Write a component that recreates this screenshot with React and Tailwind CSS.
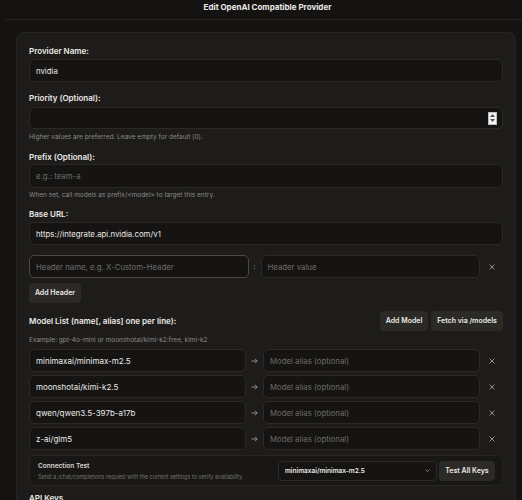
import React from 'react'

const font = { fontFamily: 'Inter, "Noto Sans", sans-serif' }

const inputCls =
  'block w-full h-[23px] rounded-[5px] border border-[#2a2926] bg-[#151413] px-[6px] text-[7.8px] text-[#ebe9e6] placeholder:text-[#6e6b67] outline-none'

function Label({ children, className = '' }) {
  return (
    <div className={`text-[8px] leading-[12px] font-semibold text-[#ebe9e6] ${className}`}>
      {children}
    </div>
  )
}

function Help({ children, className = '' }) {
  return <div className={`text-[6.5px] leading-[10px] text-[#8c8985] ${className}`}>{children}</div>
}

function SmallButton({ children, className = '' }) {
  return (
    <button
      className={`block h-[20px] rounded-[4px] bg-[#2b2a27] text-[7px] font-semibold text-[#ebe9e6] ${className}`}
    >
      {children}
    </button>
  )
}

function RemoveX() {
  return (
    <div className="w-[23px] flex justify-center items-center text-[#9a9794]">
      <svg width="6" height="6" viewBox="0 0 6 6" fill="none" stroke="currentColor" strokeWidth="0.9">
        <path d="M0.5 0.5 L5.5 5.5 M5.5 0.5 L0.5 5.5" />
      </svg>
    </div>
  )
}

const models = ['minimaxai/minimax-m2.5', 'moonshotai/kimi-k2.5', 'qwen/qwen3.5-397b-a17b', 'z-ai/glm5']

export default function App() {
  return (
    <div className="w-[522px] h-[500px] overflow-hidden bg-[#141312] text-[8px] leading-[12px]" style={font}>
      {/* Title bar */}
      <div className="ml-[5px] h-[20px] border-b border-[#262523] flex items-center justify-center">
        <span className="text-[8px] font-bold text-[#ebe9e6] -mt-[5px] ml-[8px]">
          Edit OpenAI Compatible Provider
        </span>
      </div>

      {/* Form card */}
      <div className="ml-[16px] mr-[6px] mt-[12px] rounded-t-[8px] border border-[#262523] bg-[#1d1c1a] px-[12px] pt-[12px] h-[500px]">
        <Label>Provider Name:</Label>
        <input className={`${inputCls} mt-[2px]`} defaultValue="nvidia" />

        <Label className="mt-[10px]">Priority (Optional):</Label>
        <div className="mt-[3px] h-[22px] rounded-[5px] border border-[#2a2926] bg-[#151413] flex items-center justify-end pr-[5px]">
          <div className="w-[9px] h-[13px] bg-[#f4f4f4] border border-[#bdbdbd] flex flex-col items-center justify-center gap-[2px]">
            <svg width="5" height="3" viewBox="0 0 5 3"><path d="M2.5 0 L5 3 L0 3 Z" fill="#555" /></svg>
            <svg width="5" height="3" viewBox="0 0 5 3"><path d="M0 0 L5 0 L2.5 3 Z" fill="#555" /></svg>
          </div>
        </div>
        <Help className="mt-[3px]">Higher values are preferred. Leave empty for default (0).</Help>

        <Label className="mt-[9px]">Prefix (Optional):</Label>
        <input className={`${inputCls} mt-[1px] h-[24px]`} placeholder="e.g.: team-a" />
        <Help className="mt-[2px]">When set, call models as prefix/&lt;model&gt; to target this entry.</Help>

        <Label className="mt-[8px]">Base URL:</Label>
        <input className={`${inputCls} mt-[2px]`} defaultValue="https://integrate.api.nvidia.com/v1" />

        {/* Custom headers */}
        <div className="mt-[10px] flex items-center">
          <input
            className="block flex-1 min-w-0 h-[23px] rounded-[5px] border-[1.5px] border-[#4a4845] bg-[#151413] px-[6px] text-[7.8px] text-[#ebe9e6] placeholder:text-[#6e6b67] outline-none"
            placeholder="Header name, e.g. X-Custom-Header"
          />
          <div className="w-[12px] text-center text-[7px] text-[#9a9794]">:</div>
          <input className={`${inputCls} flex-1 min-w-0`} placeholder="Header value" />
          <RemoveX />
        </div>
        <SmallButton className="mt-[5px] w-[52px]">Add Header</SmallButton>

        {/* Models */}
        <div className="mt-[8px] flex items-center justify-between">
          <Label>Model List (name[, alias] one per line):</Label>
          <div className="flex gap-[3px]">
            <SmallButton className="w-[48px]">Add Model</SmallButton>
            <SmallButton className="w-[72px]">Fetch via /models</SmallButton>
          </div>
        </div>
        <Help className="mt-[4px]">Example: gpt-4o-mini or moonshotai/kimi-k2:free, kimi-k2</Help>

        <div className="mt-[4px] flex flex-col gap-[3px]">
          {models.map((m) => (
            <div key={m} className="flex items-center">
              <input className={`${inputCls} flex-1 min-w-0 text-[8px]`} defaultValue={m} />
              <div className="w-[17px] flex justify-center text-[#9a9794]">
                <svg width="7" height="6" viewBox="0 0 7 6" fill="none" stroke="currentColor" strokeWidth="0.9">
                  <path d="M0.5 3 H6.2 M4 0.8 L6.2 3 L4 5.2" />
                </svg>
              </div>
              <input className={`${inputCls} flex-1 min-w-0`} placeholder="Model alias (optional)" />
              <RemoveX />
            </div>
          ))}
        </div>

        {/* Connection test */}
        <div className="mt-[5px] h-[31px] rounded-[5px] border border-[#262523] bg-[#181716] flex items-center pl-[8px] pr-[7px]">
          <div className="flex-1 min-w-0">
            <div className="text-[6.5px] leading-[10px] font-semibold text-[#d8d6d2]">Connection Test</div>
            <div className="mt-[2px] text-[5.5px] leading-[8px] text-[#76736f] whitespace-nowrap">
              Send a /chat/completions request with the current settings to verify availability.
            </div>
          </div>
          <div className="ml-[8px] w-[159px] h-[20px] rounded-[4px] border border-[#2a2926] bg-[#151413] flex items-center justify-between px-[6px]">
            <span className="text-[6.5px] font-semibold text-[#ebe9e6]">minimaxai/minimax-m2.5</span>
            <svg width="5" height="3" viewBox="0 0 5 3" fill="none" stroke="#9a9794" strokeWidth="0.8">
              <path d="M0.5 0.5 L2.5 2.5 L4.5 0.5" />
            </svg>
          </div>
          <SmallButton className="ml-[2px] w-[56px] text-[6.5px]">Test All Keys</SmallButton>
        </div>

        <Label className="mt-[6px]">API Keys</Label>
      </div>
    </div>
  )
}
